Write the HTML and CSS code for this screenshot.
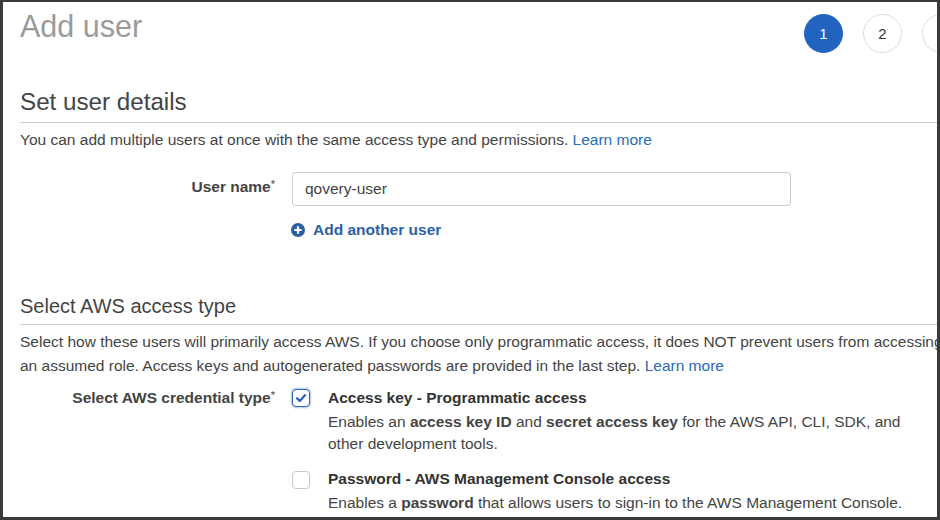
FILE: index.html
```html
<!DOCTYPE html>
<html>
<head>
<meta charset="utf-8">
<link rel="stylesheet" href="styles.css">
</head>
<body>
<div class="frame">
  <div class="top">
    <h1 class="title">Add user</h1>
    <div class="steps">
      <span class="step active">1</span>
      <span class="step">2</span>
      <span class="step">3</span>
    </div>
  </div>

  <h2 class="section">Set user details</h2>
  <p class="desc">You can add multiple users at once with the same access type and permissions. <a class="link">Learn more</a></p>

  <div class="row row-user">
    <div class="label">User name<sup>*</sup></div>
    <div class="control">
      <div class="input">qovery-user</div>
      <div class="add">
        <svg class="plus" viewBox="0 0 14 14" width="14" height="14"><circle cx="7" cy="7" r="7" fill="#2b5fa6"/><path d="M7 3.3v7.4M3.3 7h7.4" stroke="#fff" stroke-width="2.2"/></svg>
        <span>Add another user</span>
      </div>
    </div>
  </div>

  <h2 class="section section2">Select AWS access type</h2>
  <p class="desc desc2"><span class="nw">Select how these users will primarily access AWS. If you choose only programmatic access, it does NOT prevent users from accessing the console using</span><br><span class="nw">an assumed role. Access keys and autogenerated passwords are provided in the last step. <a class="link">Learn more</a></span></p>

  <div class="row row-cred">
    <div class="label">Select AWS credential type<sup>*</sup></div>
    <div class="control">
      <div class="option">
        <span class="box checked"><svg viewBox="0 0 18 18" width="18" height="18"><path d="M4.6 9.4l3 2.9 5.8-6.5" fill="none" stroke="#2a62b8" stroke-width="2.6" stroke-linecap="round" stroke-linejoin="round"/></svg></span>
        <div class="opt-text">
          <div class="opt-title">Access key - Programmatic access</div>
          <div class="opt-desc">Enables an <b>access key ID</b> and <b>secret access key</b> for the AWS API, CLI, SDK, and<br>other development tools.</div>
        </div>
      </div>
      <div class="option option2">
        <span class="box"></span>
        <div class="opt-text">
          <div class="opt-title">Password - AWS Management Console access</div>
          <div class="opt-desc">Enables a <b>password</b> that allows users to sign-in to the AWS Management Console.</div>
        </div>
      </div>
    </div>
  </div>
</div>
</body>
</html>
```

FILE: styles.css
```css
html, body {
  margin: 0;
  padding: 0;
  background: #ffffff;
}
.frame {
  width: 940px;
  height: 520px;
  box-sizing: border-box;
  border: 3px solid #3a3a3a;
  border-top-width: 2px;
  overflow: hidden;
  padding-left: 17px;
  font-family: "Liberation Sans", Arial, sans-serif;
  font-size: 15.5px;
  color: #444444;
  background: #ffffff;
}
.top {
  display: flex;
  justify-content: space-between;
  align-items: flex-start;
  height: 64px;
}
.title {
  margin: 7px 0 0 0;
  font-size: 30.5px;
  font-weight: normal;
  color: #9a9a9a;
  line-height: 34px;
}
.steps {
  display: flex;
  gap: 20px;
  margin-top: 12px;
  margin-right: -24px;
}
.step {
  width: 37px;
  height: 37px;
  border-radius: 50%;
  border: 1px solid #dcdcdc;
  display: flex;
  align-items: center;
  justify-content: center;
  font-size: 15px;
  color: #333333;
  background: #fff;
}
.step.active {
  background: #2063c0;
  border-color: #2063c0;
  color: #ffffff;
}
.section {
  margin: 22px 0 0 0;
  font-size: 24.2px;
  font-weight: normal;
  color: #444444;
  line-height: 28px;
  padding-bottom: 6px;
  border-bottom: 1px solid #cccccc;
}
.desc {
  margin: 5px 0 0 0;
  line-height: 24px;
}
.link {
  color: #2a6ab5;
}
.nw {
  white-space: nowrap;
}
.row {
  display: flex;
  gap: 17px;
}
.label {
  width: 255px;
  flex: none;
  text-align: right;
  font-weight: bold;
  color: #444;
  line-height: 20px;
}
.label sup {
  font-weight: normal;
  font-size: 11px;
  vertical-align: 0;
  position: relative;
  top: -4px;
}
.row-user {
  margin-top: 20px;
}
.row-user .label {
  padding-top: 5px;
}
.input {
  width: 499px;
  height: 34px;
  box-sizing: border-box;
  border: 1px solid #cccccc;
  border-radius: 3px;
  padding: 0 12px;
  line-height: 32px;
  color: #444444;
}
.add {
  display: flex;
  align-items: center;
  gap: 8px;
  margin-top: 16px;
  font-weight: bold;
  color: #2b5fa6;
  line-height: 16px;
}
.plus {
  flex: none;
  margin-left: -1px;
}
.section2 {
  margin-top: 55px;
  font-size: 20px;
  line-height: 26px;
  padding-bottom: 5px;
}
.desc2 {
  margin-top: 5px;
}
.row-cred {
  margin-top: 10px;
}
.option {
  display: flex;
  gap: 18px;
}
.box {
  flex: none;
  width: 18px;
  height: 18px;
  box-sizing: border-box;
  border: 1px solid #c8c8c8;
  border-radius: 4px;
  margin-top: 1px;
  display: flex;
  align-items: center;
  justify-content: center;
  background: #fff;
}
.box.checked {
  border-color: #2a62b8;
  box-shadow: 0 0 2px 1px rgba(42, 98, 184, 0.35);
}
.box svg {
  display: block;
}
.opt-title {
  font-weight: bold;
  color: #333333;
  line-height: 20px;
}
.opt-desc {
  line-height: 22px;
  margin-top: 3px;
}
.option2 {
  margin-top: 14px;
}
.option2 .box {
  margin-top: 2px;
}
```
